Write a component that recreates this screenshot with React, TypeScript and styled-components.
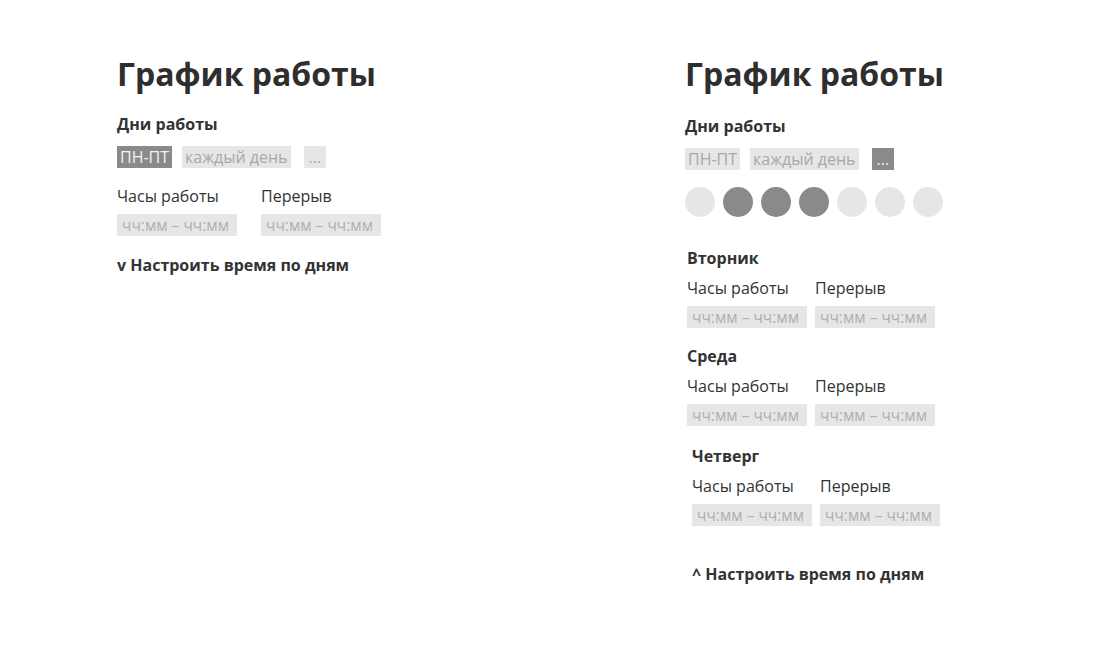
import styled, { createGlobalStyle } from "styled-components";

const GlobalStyle = createGlobalStyle`
    html, body {
        margin: 0;
        padding: 0;
        background: #ffffff;
    }
    body {
        font-family: 'Open Sans', 'Noto Sans', sans-serif;
        color: #333333;
    }
`;

type Day = { name: string; shift: number; top: number };

const days: Day[] = [
    { name: "Вторник", shift: 2, top: 31 },
    { name: "Среда", shift: 2, top: 18 },
    { name: "Четверг", shift: 7, top: 20 },
];

const week = [false, true, true, true, false, false, false];

const HoursRow = ({ gap }: { gap: number }) => (
    <Fields $gap={gap}>
        <Field>
            <Label>Часы работы</Label>
            <TimeInput>чч:мм – чч:мм</TimeInput>
        </Field>
        <Field>
            <Label>Перерыв</Label>
            <TimeInput>чч:мм – чч:мм</TimeInput>
        </Field>
    </Fields>
);

export default function App() {
    return (
        <>
            <GlobalStyle />
            <Page>
                <Column $width={568}>
                    <Title>График работы</Title>
                    <Subtitle $top={20}>Дни работы</Subtitle>
                    <Chips>
                        <Chip $active>ПН-ПТ</Chip>
                        <Chip>каждый день</Chip>
                        <Chip $more>...</Chip>
                    </Chips>
                    <Block $top={18}>
                        <HoursRow gap={24} />
                    </Block>
                    <Toggle $top={19}>v Настроить время по дням</Toggle>
                </Column>

                <Column $width={360}>
                    <Title>График работы</Title>
                    <Subtitle $top={22}>Дни работы</Subtitle>
                    <Chips>
                        <Chip>ПН-ПТ</Chip>
                        <Chip>каждый день</Chip>
                        <Chip $active $more>...</Chip>
                    </Chips>
                    <Week>
                        {week.map((on, i) => (
                            <DayDot key={i} $active={on} />
                        ))}
                    </Week>
                    {days.map((d) => (
                        <DayBlock key={d.name} $shift={d.shift} $top={d.top}>
                            <DayName>{d.name}</DayName>
                            <HoursRow gap={8} />
                        </DayBlock>
                    ))}
                    <Toggle $top={38} $shift={7}>^ Настроить время по дням</Toggle>
                </Column>
            </Page>
        </>
    );
}

const Page = styled.div`
    display: flex;
    padding: 54px 0 0 117px;
    min-height: 665px;
    box-sizing: border-box;
`;

const Column = styled.div<{ $width: number }>`
    display: flex;
    flex-direction: column;
    align-items: flex-start;
    flex: 0 0 ${(p) => p.$width}px;
`;

const Title = styled.h1`
    margin: 0;
    font-size: 32px;
    line-height: 40px;
    font-weight: 700;
    color: #2e2e2e;
`;

const Subtitle = styled.h3<{ $top: number }>`
    margin: ${(p) => p.$top}px 0 0;
    font-size: 16px;
    line-height: 20px;
    font-weight: 700;
`;

const Chips = styled.div`
    display: flex;
    gap: 10px;
    margin-top: 12px;
`;

const Chip = styled.span<{ $active?: boolean; $more?: boolean }>`
    display: inline-block;
    height: 22px;
    line-height: 22px;
    padding: ${(p) => (p.$more ? "0 5px" : "0 3px")};
    margin-left: ${(p) => (p.$more ? "3px" : "0")};
    font-size: 16px;
    background: ${(p) => (p.$active ? "#8a8a8a" : "#e6e6e6")};
    color: ${(p) => (p.$active ? "#f2f2f2" : "#a8a8a8")};
`;

const Week = styled.div`
    display: flex;
    gap: 8px;
    margin-top: 17px;
`;

const DayDot = styled.span<{ $active: boolean }>`
    width: 30px;
    height: 30px;
    border-radius: 50%;
    background: ${(p) => (p.$active ? "#8a8a8a" : "#e6e6e6")};
`;

const Block = styled.div<{ $top: number }>`
    margin-top: ${(p) => p.$top}px;
`;

const DayBlock = styled.div<{ $shift: number; $top: number }>`
    margin: ${(p) => p.$top}px 0 0 ${(p) => p.$shift}px;
`;

const DayName = styled.div`
    font-size: 16px;
    line-height: 20px;
    font-weight: 700;
    margin-bottom: 10px;
`;

const Fields = styled.div<{ $gap: number }>`
    display: flex;
    gap: ${(p) => p.$gap}px;
`;

const Field = styled.div`
    display: flex;
    flex-direction: column;
    gap: 8px;
`;

const Label = styled.span`
    font-size: 16px;
    line-height: 20px;
    color: #333333;
`;

const TimeInput = styled.span`
    display: block;
    width: 120px;
    height: 22px;
    line-height: 22px;
    padding: 0 5px;
    box-sizing: border-box;
    background: #e6e6e6;
    color: #b0b0b0;
    font-size: 15.5px;
    white-space: nowrap;
    overflow: hidden;
`;

const Toggle = styled.div<{ $top: number; $shift?: number }>`
    margin: ${(p) => p.$top}px 0 0 ${(p) => p.$shift ?? 0}px;
    font-size: 16px;
    line-height: 20px;
    font-weight: 700;
    cursor: pointer;
`;
